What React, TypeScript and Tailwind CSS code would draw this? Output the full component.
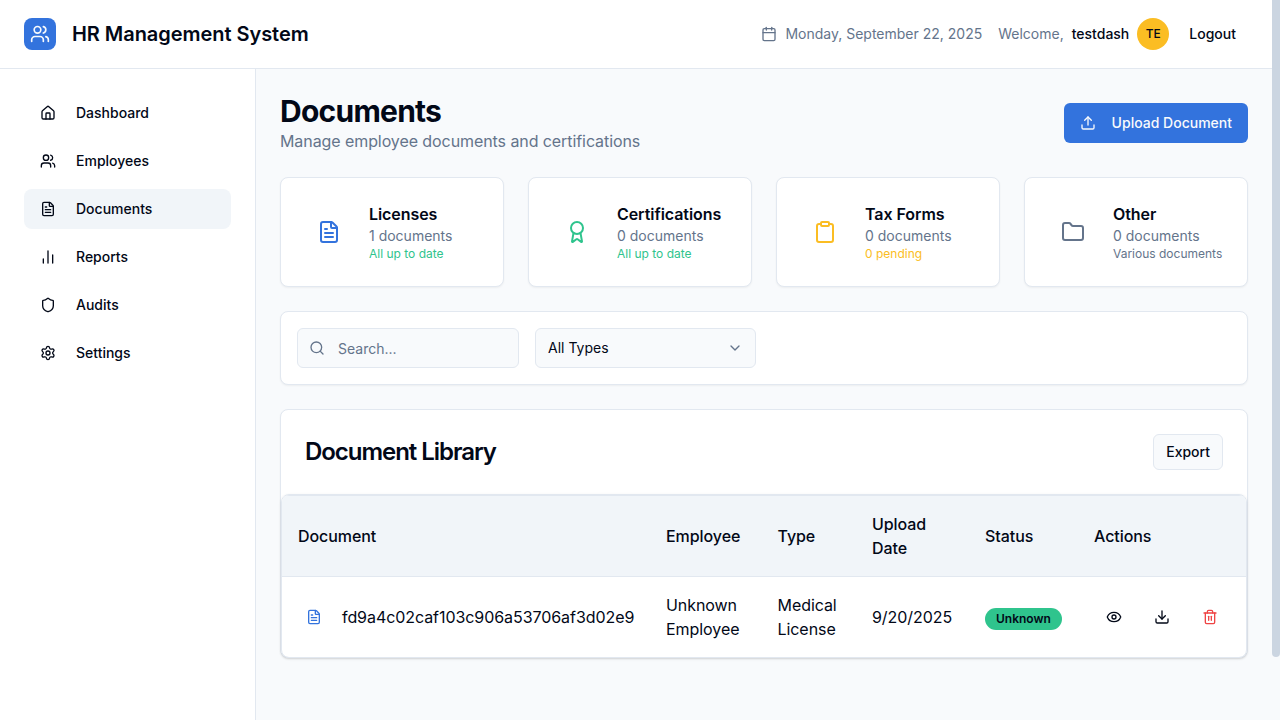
import React from 'react'
import {
  Users,
  Calendar,
  Upload,
  House,
  FileText,
  ChartNoAxesColumn,
  Shield,
  Settings,
  Award,
  Clipboard,
  Folder,
  Search,
  ChevronDown,
  Eye,
  Download,
  Trash2,
} from 'lucide-react'

const navItems = [
  { label: 'Dashboard', icon: House },
  { label: 'Employees', icon: Users },
  { label: 'Documents', icon: FileText, active: true },
  { label: 'Reports', icon: ChartNoAxesColumn },
  { label: 'Audits', icon: Shield },
  { label: 'Settings', icon: Settings },
]

const stats = [
  { title: 'Licenses', count: '1 documents', note: 'All up to date', icon: FileText, iconClass: 'text-[#3373dd]', noteClass: 'text-[#2fc48d]' },
  { title: 'Certifications', count: '0 documents', note: 'All up to date', icon: Award, iconClass: 'text-[#2fc48d]', noteClass: 'text-[#2fc48d]' },
  { title: 'Tax Forms', count: '0 documents', note: '0 pending', icon: Clipboard, iconClass: 'text-[#fbbd23]', noteClass: 'text-[#fbbd23]' },
  { title: 'Other', count: '0 documents', note: 'Various documents', icon: Folder, iconClass: 'text-[#64748b]', noteClass: 'text-[#64748b]' },
]

function App() {
  return (
    <div className="relative h-screen overflow-hidden flex flex-col bg-[#f8fafc] text-[#020817] font-['Inter',sans-serif]">
      {/* Header */}
      <header className="h-[69px] shrink-0 bg-white border-b border-[#e2e8f0] flex items-center justify-between pl-6 pr-8">
        <div className="flex items-center gap-4">
          <div className="w-8 h-8 rounded-lg bg-[#3373dd] flex items-center justify-center text-[#f8fafc]">
            <Users size={20} />
          </div>
          <h1 className="text-xl font-semibold tracking-[-0.05px]">HR Management System</h1>
        </div>
        <div className="flex items-center text-sm">
          <Calendar size={16} className="text-[#64748b]" />
          <span className="ml-2 text-[#64748b]">Monday, September 22, 2025</span>
          <span className="ml-4 text-[#64748b]">Welcome,</span>
          <span className="ml-2 font-medium">testdash</span>
          <div className="ml-2 w-8 h-8 rounded-full bg-[#fbbd23] flex items-center justify-center text-xs font-medium">TE</div>
          <button className="ml-2 px-3 h-9 font-medium">Logout</button>
        </div>
      </header>

      <div className="flex flex-1 min-h-0">
        {/* Sidebar */}
        <aside className="w-[256px] shrink-0 bg-white border-r border-[#e2e8f0] pl-6 pr-6 py-6">
          <nav className="flex flex-col gap-2">
            {navItems.map((item) => (
              <a key={item.label} className={`h-10 rounded-lg flex items-center gap-5 px-4 text-sm font-medium ${item.active ? 'bg-[#f1f5f9]' : ''}`}>
                <item.icon size={16} />
                {item.label}
              </a>
            ))}
          </nav>
        </aside>

        {/* Main */}
        <main className="flex-1 min-w-0 pl-6 pr-8 pt-6">
          <div className="flex items-start justify-between">
            <div>
              <h2 className="text-3xl font-bold tracking-tight leading-9">Documents</h2>
              <p className="text-[#64748b] tracking-[-0.08px]">Manage employee documents and certifications</p>
            </div>
            <button className="mt-[10px] h-10 px-4 rounded-md bg-[#3373dd] text-[#f8fafc] text-sm font-medium flex items-center gap-4">
              <Upload size={16} />
              Upload Document
            </button>
          </div>

          <div className="grid grid-cols-4 gap-6 mt-[24px]">
            {stats.map((s) => (
              <div key={s.title} className="h-[110px] bg-white border border-[#e2e8f0] rounded-lg shadow-xs flex items-center pl-[36px]">
                <s.icon size={24} className={s.iconClass} />
                <div className="ml-[28px]">
                  <div className="font-semibold leading-6 tracking-[-0.065px]">{s.title}</div>
                  <div className="text-sm text-[#64748b] leading-5">{s.count}</div>
                  <div className={`text-xs leading-4 ${s.noteClass}`}>{s.note}</div>
                </div>
              </div>
            ))}
          </div>

          <div className="mt-6 h-[74px] bg-white border border-[#e2e8f0] rounded-lg shadow-xs flex items-center gap-4 px-4">
            <div className="w-[222px] h-10 bg-[#f8fafc] border border-[#e2e8f0] rounded-md flex items-center pl-[11px] pr-3 text-sm text-[#64748b]">
              <Search size={16} />
              <span className="ml-[13px] pt-px">Search...</span>
            </div>
            <div className="w-[221px] h-10 bg-[#f8fafc] border border-[#e2e8f0] rounded-md flex items-center justify-between px-3 text-sm">
              All Types
              <ChevronDown size={16} className="text-[#64748b]" />
            </div>
          </div>

          <div className="mt-6 bg-white border border-[#e2e8f0] rounded-lg shadow-xs">
            <div className="h-[84px] flex items-center justify-between px-6">
              <h3 className="text-2xl font-semibold tracking-[-1.04px]">Document Library</h3>
              <button className="h-9 px-3 rounded-md border border-[#e2e8f0] bg-[#f8fafc] text-sm font-medium">Export</button>
            </div>
            <div className="border border-[#e2e8f0] rounded-lg overflow-hidden -mb-px shadow-sm tracking-[-0.065px]">
              <table className="w-full table-fixed text-left">
                <thead className="bg-[#f1f5f9]">
                  <tr className="h-[81px] border-t border-b border-[#e2e8f0]">
                    <th className="w-[368px] px-4 font-medium">Document</th>
                    <th className="w-[111.5px] px-4 font-medium">Employee</th>
                    <th className="w-[94.5px] px-4 font-medium">Type</th>
                    <th className="w-[113px] px-4 font-medium">Upload Date</th>
                    <th className="w-[109px] px-4 font-medium">Status</th>
                    <th className="px-4 font-medium">Actions</th>
                  </tr>
                </thead>
                <tbody>
                  <tr className="h-[80px]">
                    <td className="px-4 pt-px">
                      <div className="flex items-center">
                        <div className="w-[32px] shrink-0 flex justify-center">
                          <FileText size={16} className="text-[#3373dd]" />
                        </div>
                        <span className="ml-3">fd9a4c02caf103c906a53706af3d02e9</span>
                      </div>
                    </td>
                    <td className="px-4 pt-px">Unknown Employee</td>
                    <td className="px-4 pt-px">Medical License</td>
                    <td className="px-4 pt-px">9/20/2025</td>
                    <td className="px-4 pt-px">
                      <span className="inline-flex items-center h-[22px] px-[11px] rounded-full bg-[#2fc48d] text-xs font-semibold tracking-normal">Unknown</span>
                    </td>
                    <td className="px-4 pt-px">
                      <div className="flex items-center gap-8 pl-3">
                        <Eye size={16} />
                        <Download size={16} />
                        <Trash2 size={16} className="text-[#ef4444]" />
                      </div>
                    </td>
                  </tr>
                </tbody>
              </table>
            </div>
          </div>
        </main>
      </div>

      {/* Scrollbar */}
      <div className="absolute top-0 right-0 w-2 h-[657px] rounded-b-full bg-[#cbd5e1]" />
    </div>
  )
}

export default App
